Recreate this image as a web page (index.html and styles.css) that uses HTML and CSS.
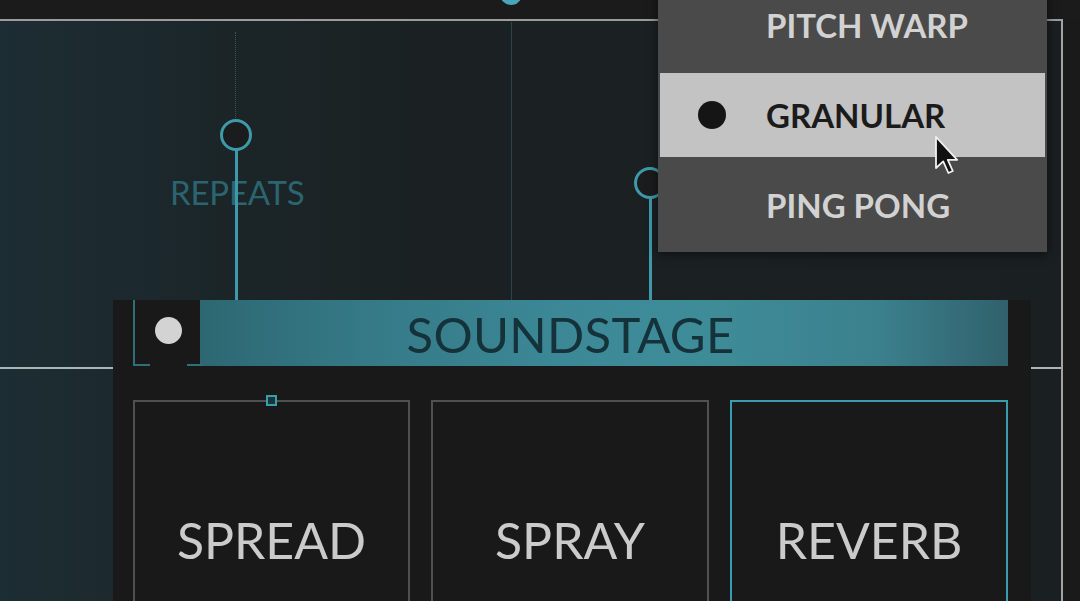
FILE: index.html
```html
<!DOCTYPE html>
<html>
<head>
<meta charset="utf-8">
<link rel="stylesheet" href="styles.css">
</head>
<body>
<div class="topbar"></div>
<div class="frame">
  <div class="upper">
    <div class="pin-top"></div>
    <div class="guide"></div>
    <div class="dotted"></div>
    <div class="label-repeats">REPEATS</div>
    <div class="knob knob-a"></div>
    <div class="stem stem-a"></div>
    <div class="knob knob-b"></div>
    <div class="stem stem-b"></div>
  </div>
  <section class="panel">
    <header class="panel-head">
      <div class="head-row">
        <div class="power"><span class="power-dot"></span></div>
        <div class="head-bar"></div>
      </div>
      <h2 class="head-title">SOUNDSTAGE</h2>
    </header>
    <div class="pads">
      <div class="pad"><span class="pad-marker"></span>SPREAD</div>
      <div class="pad">SPRAY</div>
      <div class="pad pad-active">REVERB</div>
    </div>
  </section>
</div>
<ul class="menu">
  <li class="menu-item">PITCH WARP</li>
  <li class="menu-item menu-item-selected"><span class="menu-dot"></span>GRANULAR</li>
  <li class="menu-item">PING PONG</li>
</ul>
<svg class="cursor" width="26" height="40" viewBox="0 0 13 20">
  <path d="M1 1 L1 16.5 L4.6 13.2 L7.2 19 L9.4 18 L6.9 12.4 L11.6 12.4 Z" fill="#111" stroke="#f2f2f2" stroke-width="0.9" stroke-linejoin="round"/>
</svg>
</body>
</html>
```

FILE: styles.css
```css
* { box-sizing: border-box; }
html, body {
  margin: 0;
  padding: 0;
}
body {
  width: 1080px;
  height: 601px;
  overflow: hidden;
  background: #1a1a1a;
  font-family: "Lato", "Open Sans", sans-serif;
  position: relative;
}
.topbar {
  height: 19px;
  background: #1b1b1b;
}
.frame {
  width: 1063px;
  height: 582px;
  border-top: 2px solid #9c9c9c;
  border-right: 2px solid #a3a3a3;
  background: linear-gradient(90deg, #1c2d33 0%, #1c2a2f 10%, #1b2528 22%, #1b2123 40%, #1b2022 70%, #1a1f21 100%);
}
.upper {
  position: relative;
  height: 348px;
  border-bottom: 2px solid #a9b6b9;
}
.pin-top {
  position: absolute;
  left: 500px;
  top: -38px;
  width: 22px;
  height: 22px;
  border-radius: 50%;
  background: #4aa6b6;
}
.guide {
  position: absolute;
  left: 511px;
  top: 1px;
  width: 1px;
  height: 278px;
  background: #2c4449;
}
.dotted {
  position: absolute;
  left: 235px;
  top: 11px;
  height: 88px;
  border-left: 1px dotted #2f5860;
}
.label-repeats {
  position: absolute;
  left: 170px;
  top: 155px;
  font-size: 33px;
  line-height: 1;
  color: #2c6470;
  letter-spacing: -0.2px;
}
.knob {
  position: absolute;
  width: 32px;
  height: 32px;
  border-radius: 50%;
  border: 3px solid #3e9aaa;
  background: #1a1c1d;
  z-index: 2;
}
.knob-a { left: 220px; top: 98px; }
.knob-b { left: 634px; top: 146px; }
.stem {
  position: absolute;
  width: 3px;
  background: #3e9aaa;
  z-index: 1;
}
.stem-a { left: 235px; top: 128px; height: 152px; }
.stem-b { left: 649px; top: 176px; height: 104px; }

.panel {
  position: relative;
  z-index: 3;
  margin: -69px 0 0 113px;
  width: 918px;
  height: 320px;
  background: #1a1919;
  padding: 0 23px 0 20px;
}
.panel-head {
  display: grid;
  height: 66px;
}
.head-row, .head-title {
  grid-area: 1 / 1;
}
.head-row {
  display: flex;
}
.power {
  position: relative;
  width: 67px;
  border-left: 2px solid #2e6f7a;
  display: flex;
  align-items: center;
  padding-left: 20px;
  padding-bottom: 6px;
}
.power::before, .power::after {
  content: "";
  position: absolute;
  bottom: 0;
  height: 2px;
  background: #2e6f7a;
}
.power::before { left: 0; width: 15px; }
.power::after { left: 52px; width: 15px; }
.power-dot {
  width: 27px;
  height: 27px;
  border-radius: 50%;
  background: #d3d3d3;
}
.head-bar {
  flex: 1;
  background: linear-gradient(90deg, #2d6872 0%, #357986 20%, #3c8897 45%, #3f8c99 62%, #3b808d 84%, #30616c 100%);
}
.head-title {
  margin: 0;
  align-self: center;
  justify-self: center;
  font-size: 49px;
  font-weight: 400;
  line-height: 1;
  color: #15313a;
  letter-spacing: 0.3px;
  padding-top: 2px;
}
.pads {
  margin-top: 34px;
  display: grid;
  grid-template-columns: 277px 278px 278px;
  column-gap: 21px;
}
.pad {
  position: relative;
  height: 230px;
  border: 2px solid #505050;
  color: #cbcbcb;
  font-size: 50px;
  line-height: 1;
  text-align: center;
  padding-top: 113px;
}
.pad-active {
  border-color: #3b9cb0;
}
.pad-marker {
  position: absolute;
  left: 131px;
  top: -7px;
  width: 11px;
  height: 11px;
  border: 2px solid #3b9cac;
  background: #1d3338;
}

.menu {
  position: absolute;
  left: 658px;
  top: -20px;
  width: 389px;
  margin: 0;
  padding: 3px 2px 5px;
  list-style: none;
  background: #4a4a4a;
  box-shadow: 0 2px 10px rgba(0, 0, 0, 0.55);
  z-index: 5;
  display: flex;
  flex-direction: column;
  gap: 6px;
}
.menu-item {
  height: 84px;
  display: flex;
  align-items: center;
  padding-left: 106px;
  font-size: 33px;
  font-weight: 700;
  color: #d2d2d2;
  line-height: 1;
}
.menu-item-selected {
  background: #c3c3c3;
  color: #1b1b1b;
  padding-left: 38px;
}
.menu-dot {
  width: 28px;
  height: 28px;
  border-radius: 50%;
  background: #151515;
  margin-right: 40px;
}
.cursor {
  position: absolute;
  left: 934px;
  top: 135px;
  z-index: 6;
}
```
